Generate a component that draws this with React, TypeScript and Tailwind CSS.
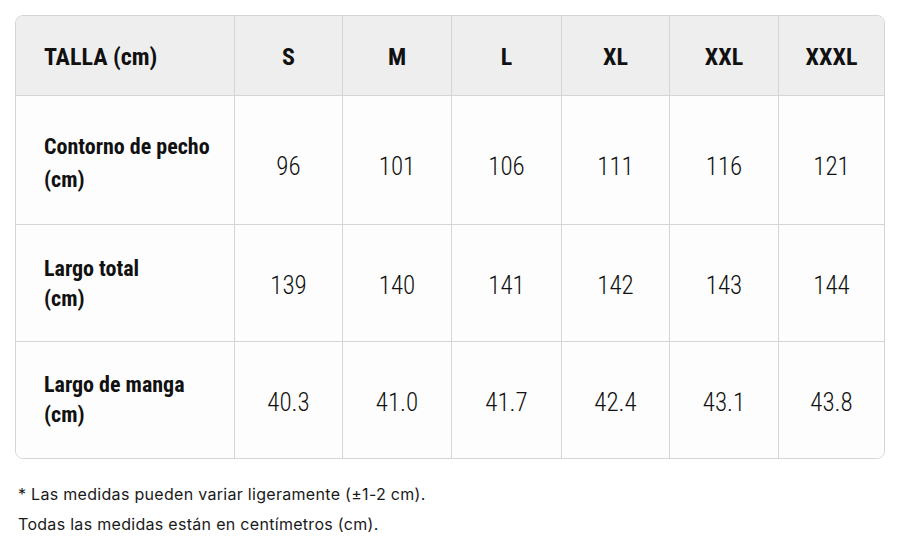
import React from "react";

const sizes = ["S", "M", "L", "XL", "XXL", "XXXL"];
const rows: { label: string; values: string[]; h: string; lead: string; lpad: string; npad: string }[] = [
  { label: "Contorno de pecho", values: ["96", "101", "106", "111", "116", "121"], h: "h-[129px]", lead: "leading-[33px]", lpad: "pt-[5px]", npad: "pt-[13px]" },
  { label: "Largo total", values: ["139", "140", "141", "142", "143", "144"], h: "h-[117px]", lead: "leading-[30px]", lpad: "pt-[2px]", npad: "pt-[6px]" },
  { label: "Largo de manga", values: ["40.3", "41.0", "41.7", "42.4", "43.1", "43.8"], h: "h-[116px]", lead: "leading-[30px]", lpad: "pt-[0px]", npad: "pt-[6px]" },
];

const cond = "font-['Roboto',sans-serif] [font-stretch:condensed]";

export default function App() {
  return (
    <div className="w-[900px] h-[552px] bg-white pt-[15px] px-[15px] text-[#111]">
      <div className="w-[870px] rounded-[8px] border border-[#d5d5d5] overflow-hidden">
        <div className="grid grid-cols-[219px_108px_109px_110px_108px_109px_1fr]">
          <div className={`h-[80px] bg-[#eeeeee] border-b border-r border-[#d5d5d5] flex items-center pl-[28px] pt-[3px] ${cond} font-bold text-[24px]`}>
            TALLA (cm)
          </div>
          {sizes.map((s, i) => (
            <div
              key={s}
              className={`h-[80px] bg-[#eeeeee] border-b border-[#d5d5d5] ${i < 5 ? "border-r" : ""} flex items-center justify-center pt-[3px] ${cond} font-bold text-[24px]`}
            >
              {s}
            </div>
          ))}
          {rows.map((r, ri) => (
            <React.Fragment key={r.label}>
              <div
                className={`${r.h} bg-[#fdfdfd] border-r border-[#d5d5d5] ${ri < 2 ? "border-b" : ""} flex flex-col justify-center pl-[28px] ${r.lpad} ${cond} font-bold text-[22px] ${r.lead}`}
              >
                <span>{r.label}</span>
                <span>(cm)</span>
              </div>
              {r.values.map((v, i) => (
                <div
                  key={i}
                  className={`${r.h} bg-[#fdfdfd] border-[#d5d5d5] ${i < 5 ? "border-r" : ""} ${ri < 2 ? "border-b" : ""} flex items-center justify-center ${r.npad} ${cond} font-light text-[25px]`}
                >
                  {v}
                </div>
              ))}
            </React.Fragment>
          ))}
        </div>
      </div>
      <div className="mt-[20px] pl-[3px] font-['Inter',sans-serif] text-[16px] tracking-[0.3px] leading-[30px] text-[#1a1a1a]">
        <p>* Las medidas pueden variar ligeramente (±1-2 cm).</p>
        <p>Todas las medidas están en centímetros (cm).</p>
      </div>
    </div>
  );
}
